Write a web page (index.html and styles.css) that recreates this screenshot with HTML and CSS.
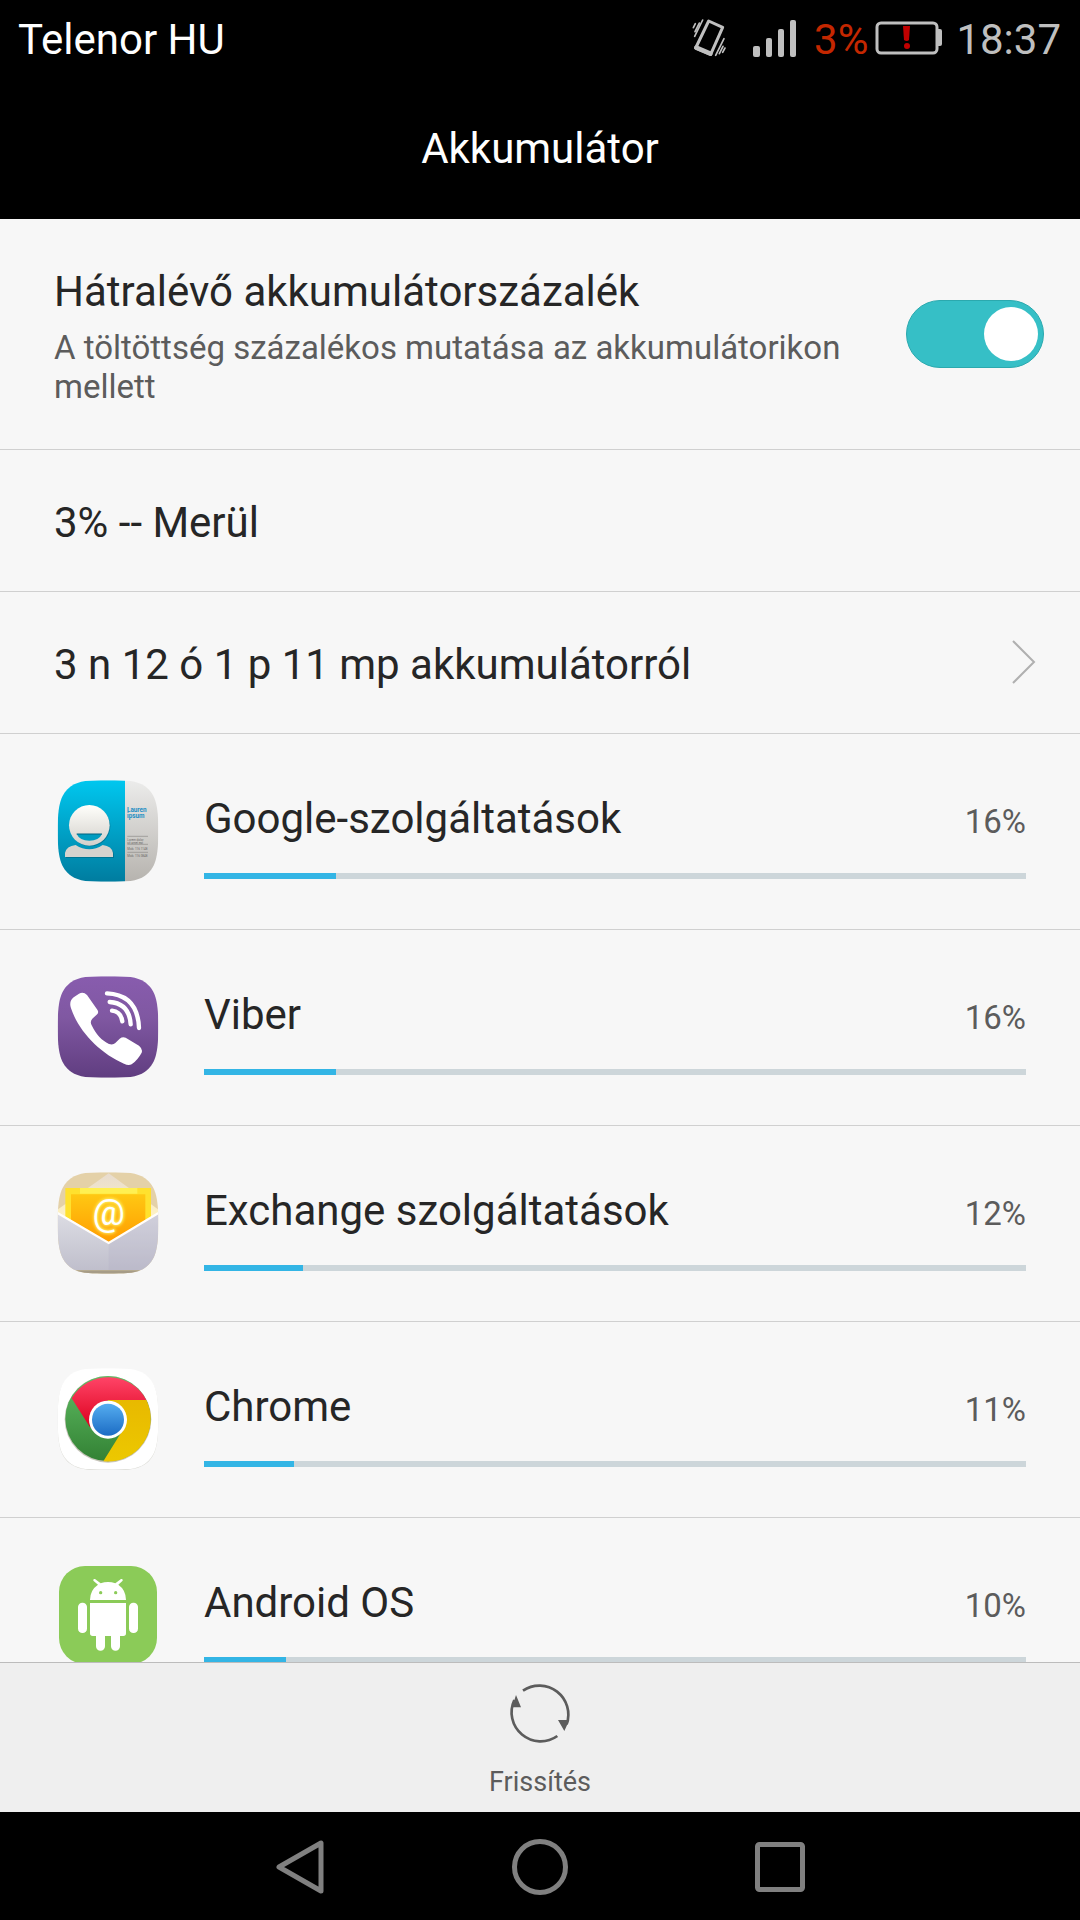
FILE: index.html
```html
<!DOCTYPE html>
<html lang="hu">
<head>
<meta charset="utf-8">
<meta name="viewport" content="width=device-width">
<title>Akkumulátor</title>
<link rel="stylesheet" href="styles.css">
</head>
<body>
<div class="status-bar">
  <span class="carrier">Telenor HU</span>
  <svg class="vibrate" width="36" height="40" viewBox="96 51 108 120" fill="none" stroke="#bfbfbf" aria-hidden="true">
    <path d="M146 60L188 79L152 160L107 141Z" stroke-width="9" stroke-linejoin="round"/>
    <path d="M109 140L151 158" stroke-width="14" stroke-linecap="round"/>
    <path d="M100 80L106 68M105 92L118 66M104 106L128 57M167 163L192 113M178 158L189 136M188 154L195 141" stroke-width="5" stroke-linecap="round"/>
  </svg>
  <svg class="signal" width="44" height="40" viewBox="0 0 44 40" fill="#bfbfbf" aria-hidden="true">
    <rect x="0" y="28" width="7" height="11" rx="2"/><rect x="13" y="20" width="6" height="19" rx="2"/><rect x="25" y="11" width="6" height="28" rx="2"/><rect x="37" y="2" width="6" height="37" rx="2"/>
  </svg>
  <span class="charge">3%</span>
  <svg class="battery" width="68" height="34" viewBox="0 0 68 34" aria-hidden="true">
    <rect x="2" y="2" width="60" height="30" rx="4" fill="none" stroke="#bfbfbf" stroke-width="3"/>
    <path d="M63 8h2q2 0 2 2v13q0 2-2 2h-2z" fill="#bfbfbf"/>
    <path d="M28 5h7l-1 14q-2 2-5 0z" fill="#c00000"/><circle cx="32" cy="25" r="3" fill="#c00000"/>
  </svg>
  <span class="clock">18:37</span>
</div>
<header class="title-bar"><h1 class="title">Akkumulátor</h1></header>
<main class="settings">
  <label class="row toggle-row" for="percent-toggle">
    <span class="toggle-text">
      <span class="label">Hátralévő akkumulátorszázalék</span>
      <span class="hint">A töltöttség százalékos mutatása az akkumulátorikon mellett</span>
    </span>
    <input class="switch" id="percent-toggle" type="checkbox" role="switch" checked>
  </label>
  <div class="row">3% -- Merül</div>
  <a class="row" href="#history">3 n 12 ó 1 p 11 mp akkumulátorról
    <svg class="chevron" width="24" height="44" viewBox="0 0 24 44" fill="none" stroke="#b0b0b0" stroke-width="2" aria-hidden="true"><path d="M1 1L22 22L1 43"/></svg>
  </a>
  <ul class="apps">
    <li class="app">
      <svg class="app-icon" viewBox="51 45 306 306" aria-hidden="true">
        <defs>
          <linearGradient id="cyan" x2="0" y2="1"><stop stop-color="#00c7ef"/><stop offset="1" stop-color="#007c9f"/></linearGradient>
          <linearGradient id="paper" x2="0" y2="1"><stop stop-color="#ececeb"/><stop offset="1" stop-color="#b6b3ae"/></linearGradient>
          <linearGradient id="face" x2="0" y2="1"><stop stop-color="#fffffb"/><stop offset="1" stop-color="#d3d0cb"/></linearGradient>
          <clipPath id="tile"><path d="M204 46C262 46 290 47 315 64C346 87 355 118 355 198C355 278 346 309 315 332C290 349 262 350 204 350C146 350 118 349 93 332C62 309 53 278 53 198C53 118 62 87 93 64C118 47 146 46 204 46Z"/></clipPath>
        </defs>
        <g clip-path="url(#tile)"><path d="M51 45h204v306H51z" fill="url(#cyan)"/><path d="M255 45h102v306H255z" fill="url(#paper)"/></g>
        <g transform="translate(3 3)" fill="#006580" opacity=".6"><circle cx="148" cy="181" r="60"/><path d="M75 276V264Q79 243 107 240Q148 266 188 240Q216 243 219 264V276Z"/></g>
        <path d="M75 276V264Q79 243 107 240Q148 266 188 240Q216 243 219 264V276Z" fill="#d6d3ce"/>
        <circle cx="148" cy="181" r="61" fill="url(#face)"/>
        <path d="M110 207H186Q177 227 148 227T110 207Z" fill="#009cc0"/>
        <path d="M110 207H186" stroke="#006580" stroke-width="3"/>
        <g class="card-name" fill="#238fc4"><text x="261" y="141">Lauren</text><text x="261" y="159">ipsum</text></g>
        <path d="M262 214H324M262 238H324M262 262H324" stroke="#8d8b88" stroke-width="2"/>
        <g class="card-info" fill="#6b6967"><text x="262" y="228">Lorem dolor</text><text x="262" y="236">sit amet est</text><text x="262" y="256">Mob. 116 1148</text><text x="262" y="276">Mob. 116 0848</text></g>
      </svg>
      <div class="usage"><span class="label">Google-szolgáltatások</span><span class="percent">16%</span><div class="bar"><div class="fill" style="width:16%"></div></div></div>
    </li>
    <li class="app">
      <svg class="app-icon" viewBox="51 48 306 306" aria-hidden="true">
        <defs><linearGradient id="violet" x2="0" y2="1"><stop stop-color="#885cae"/><stop offset=".4" stop-color="#8058a2"/><stop offset="1" stop-color="#603d80"/></linearGradient></defs>
        <g transform="translate(0 3)"><path clip-path="url(#tile)" d="M51 45h306v306H51z" fill="url(#violet)"/></g>
        <path d="M101 112L117 101Q130 94 141 105L172 149Q178 157 170 164L157 176Q149 184 155 196C168 223 185 242 207 252Q219 256 226 249L239 236Q247 230 257 233L297 257Q309 267 305 278Q293 300 275 313Q265 318 252 311C180 280 116 214 93 145Q86 124 101 112Z" fill="#fff"/>
        <path d="M201 100Q293 104 297 204M209 126Q268 130 272 193M216 152Q243 155 247 184" fill="none" stroke="#fff" stroke-width="13" stroke-linecap="round"/>
      </svg>
      <div class="usage"><span class="label">Viber</span><span class="percent">16%</span><div class="bar"><div class="fill" style="width:16%"></div></div></div>
    </li>
    <li class="app">
      <svg class="app-icon" viewBox="51 51 306 306" aria-hidden="true">
        <defs>
          <linearGradient id="amber" x2="0" y2="1"><stop stop-color="#ffc813"/><stop offset="1" stop-color="#ff9c00"/></linearGradient>
          <linearGradient id="envelope" x2="0" y2="1"><stop stop-color="#dddde4"/><stop offset="1" stop-color="#c0bfcc"/></linearGradient>
          <linearGradient id="flap" x2="0" y2="1"><stop stop-color="#e8dccf"/><stop offset="1" stop-color="#fff3c2"/></linearGradient>
          <filter id="glow" x="-30%" y="-30%" width="160%" height="160%"><feGaussianBlur stdDeviation="4"/></filter>
        </defs>
        <g transform="translate(0 6)"><g clip-path="url(#tile)"><g transform="translate(0 -6)">
          <path d="M51 48h306v312H51z" fill="#e4d1a8"/>
          <path d="M51 165L206 55L357 165V190H51Z" fill="url(#flap)"/>
          <path d="M76 99H333V200H76Z" fill="#ffe12e"/>
          <path d="M120 99H292V116H120Z" fill="#fff45b" opacity=".8"/>
          <path d="M93 118H316V195L206 263L93 195Z" fill="url(#amber)"/>
          <path d="M51 171L206 264L357 171V345H51Z" fill="url(#envelope)"/>
          <path d="M206 264L357 171V345H206Z" fill="#afaac3" opacity=".25"/>
          <path d="M51 173L206 264L357 173" fill="none" stroke="#fffdfa" stroke-width="7"/>
          <path d="M51 346h306v12H51z" fill="#a69c87"/>
        </g></g></g>
        <g class="at" fill="#fff" text-anchor="middle"><text x="206" y="210" fill="#fff36b" stroke="#fff36b" stroke-width="5" filter="url(#glow)">@</text><text x="206" y="210">@</text></g>
      </svg>
      <div class="usage"><span class="label">Exchange szolgáltatások</span><span class="percent">12%</span><div class="bar"><div class="fill" style="width:12%"></div></div></div>
    </li>
    <li class="app">
      <svg class="app-icon" viewBox="51 54 306 306" aria-hidden="true">
        <defs>
          <linearGradient id="red" x2="0" y2="1"><stop stop-color="#ff4467"/><stop offset="1" stop-color="#dc001d"/></linearGradient>
          <linearGradient id="green" x2="0" y2="1"><stop stop-color="#5fbd63"/><stop offset="1" stop-color="#338134"/></linearGradient>
          <linearGradient id="yellow" x2="0" y2="1"><stop stop-color="#e8b900"/><stop offset="1" stop-color="#ecc800"/></linearGradient>
          <linearGradient id="blue" x2="0" y2="1"><stop stop-color="#55adf0"/><stop offset="1" stop-color="#1c6cc4"/></linearGradient>
        </defs>
        <g transform="translate(0 11)"><path clip-path="url(#tile)" d="M51 45h306v306H51z" fill="#d9d9d3"/></g>
        <g transform="translate(0 9)"><path clip-path="url(#tile)" d="M51 45h306v306H51z" fill="#fff"/></g>
        <circle cx="204" cy="208" r="130" fill="#c8c5bb"/>
        <circle cx="204" cy="206" r="128" fill="url(#green)"/>
        <path d="M204 150H319A128 128 0 0 1 190 334L245 245Z" fill="url(#yellow)"/>
        <path d="M95 145A128 128 0 0 1 319 150H204L151 233Z" fill="url(#red)"/>
        <circle cx="204" cy="209" r="57" fill="#fff"/><circle cx="204" cy="209" r="48" fill="url(#blue)"/>
      </svg>
      <div class="usage"><span class="label">Chrome</span><span class="percent">11%</span><div class="bar"><div class="fill" style="width:11%"></div></div></div>
    </li>
    <li class="app">
      <svg class="app-icon" viewBox="51 42 306 306" aria-hidden="true">
        <rect x="57" y="48" width="294" height="294" rx="78" fill="#8bcb58"/>
        <g fill="#fff"><path d="M150 150Q150 120 174 104L160 92Q158 86 165 87L182 100Q204 92 226 100L243 87Q250 86 248 92L235 104Q258 120 258 150Z"/>
        <path d="M150 159H258V250Q258 258 250 258H240V289A13 13 0 0 1 213 289V258H195V289A13 13 0 0 1 168 289V258H158Q150 258 150 250Z"/>
        <rect x="114" y="158" width="27" height="91" rx="13"/><rect x="267" y="158" width="27" height="91" rx="13"/></g>
        <circle cx="182" cy="128" r="5" fill="#8bcb58"/><circle cx="227" cy="128" r="5" fill="#8bcb58"/>
      </svg>
      <div class="usage"><span class="label">Android OS</span><span class="percent">10%</span><div class="bar"><div class="fill" style="width:10%"></div></div></div>
    </li>
  </ul>
</main>
<footer class="toolbar">
  <button class="refresh" type="button">
    <svg width="64" height="64" viewBox="144 95 192 192" aria-hidden="true">
      <path d="M189 124A87 87 0 0 1 320 225M292 260A87 87 0 0 1 163 152" fill="none" stroke="#5c5c5c" stroke-width="8"/>
      <path d="M168 137L183 174H156ZM294 212H328L313 245Z" fill="#5c5c5c"/>
    </svg>
    Frissítés
  </button>
</footer>
<nav class="nav-bar">
  <button class="nav-button" type="button" aria-label="Vissza"><svg width="60" height="60" viewBox="0 0 60 60"><path d="M51 6V54L9 30Z"/></svg></button>
  <button class="nav-button" type="button" aria-label="Kezdőlap"><svg width="60" height="60" viewBox="0 0 60 60"><circle cx="30" cy="30" r="25.500"/></svg></button>
  <button class="nav-button" type="button" aria-label="Áttekintés"><svg width="60" height="60" viewBox="0 0 60 60"><rect x="7.500" y="7.500" width="45" height="45" rx="2"/></svg></button>
</nav>
</body>
</html>
```
FILE: styles.css
```css
* {
  box-sizing: border-box;
}

body {
  margin: 0;
  height: 100vh;
  display: flex;
  flex-direction: column;
  background: #f7f7f7;
  color: #262626;
  font: 42px/50px Roboto, "Noto Sans", sans-serif;
}

button {
  border: 0;
  padding: 0;
  background: none;
  font: inherit;
}

svg {
  display: block;
  flex: none;
}

.status-bar {
  flex: none;
  display: flex;
  align-items: center;
  height: 75px;
  padding: 5px 19px 0 18px;
  background: #000;
  color: #bfbfbf;
}

.status-bar svg {
  margin-bottom: 4px;
}

.carrier {
  margin-right: auto;
  color: #fff;
}

.signal {
  margin-left: 25px;
}

.charge {
  margin: 0 7px 0 17px;
  color: #c42700;
}

.clock {
  margin-left: 13px;
}

.title-bar {
  flex: none;
  padding: 49px 0 45px;
  background: #000;
  color: #fff;
  text-align: center;
}

.title {
  margin: 0;
  font-size: 42px;
  font-weight: 400;
}

.settings {
  flex: 1;
  min-height: 0;
  overflow-y: auto;
  scrollbar-width: none;
}

.row {
  display: flex;
  justify-content: space-between;
  padding: 48px 44px 43px 54px;
  border-bottom: 1px solid #d0d0d0;
  color: inherit;
  text-decoration: none;
}

.toggle-row {
  align-items: center;
  gap: 48px;
  padding-right: 36px;
}

.toggle-text {
  display: flex;
  flex-direction: column;
  gap: 11px;
}

.hint {
  color: #5c5c5c;
  font-size: 33px;
  line-height: 39px;
}

.switch {
  flex: none;
  appearance: none;
  display: flex;
  align-items: center;
  width: 138px;
  height: 68px;
  margin: 0 0 6px;
  padding: 0 5px;
  border: 1px solid #2ba9ae;
  border-radius: 34px;
  background: #36bfc6;
}

.switch::before {
  content: "";
  width: 54px;
  height: 54px;
  border-radius: 50%;
  background: #fff;
}

.switch:checked {
  justify-content: flex-end;
}

.switch:not(:checked) {
  border-color: #b0b0b0;
  background: #c4c4c4;
}

.apps {
  margin: 0;
  padding: 0;
  list-style: none;
}

.app {
  display: flex;
  gap: 45px;
  padding: 46px 54px 47px 57px;
  border-bottom: 1px solid #d0d0d0;
}

.app-icon {
  width: 102px;
  height: 102px;
}

.card-name {
  font-size: 19px;
  font-weight: 700;
}

.card-info {
  font-size: 9px;
}

.at {
  font-size: 108px;
}

.usage {
  flex: 1;
  display: grid;
  grid-template-columns: 1fr auto;
  align-items: baseline;
  align-content: start;
  row-gap: 26px;
  padding-top: 14px;
}

.percent {
  color: #5c5c5c;
  font-size: 33px;
}

.bar {
  grid-column: 1 / -1;
  height: 6px;
  background: #cdd6da;
}

.fill {
  height: 100%;
  background: #33b5e5;
}

.toolbar {
  flex: none;
  display: flex;
  justify-content: center;
  border-top: 1px solid #bcbcbc;
  background: #efefef;
}

.refresh {
  display: flex;
  flex-direction: column;
  align-items: center;
  gap: 21px;
  padding: 18px 24px 14px;
  color: #5c5c5c;
  font-size: 27px;
  line-height: 32px;
}

.nav-bar {
  flex: none;
  display: flex;
  justify-content: center;
  height: 108px;
  padding-top: 2px;
  background: #000;
}

.nav-button {
  display: flex;
  align-items: center;
  justify-content: center;
  width: 240px;
}

.nav-button svg {
  fill: none;
  stroke: #808080;
  stroke-width: 5px;
  stroke-linejoin: round;
}
```
